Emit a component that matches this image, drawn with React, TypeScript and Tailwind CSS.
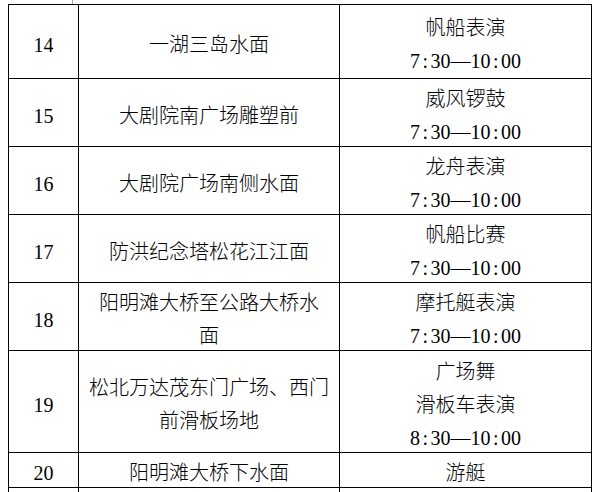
import React from "react";

type Row = { n: string; place: string[]; acts: string[]; h: string };

const rows: Row[] = [
  { n: "14", place: ["一湖三岛水面"], acts: ["帆船表演", "7:30—10:00"], h: "h-[74px]" },
  { n: "15", place: ["大剧院南广场雕塑前"], acts: ["威风锣鼓", "7:30—10:00"], h: "h-[68px]" },
  { n: "16", place: ["大剧院广场南侧水面"], acts: ["龙舟表演", "7:30—10:00"], h: "h-[68px]" },
  { n: "17", place: ["防洪纪念塔松花江江面"], acts: ["帆船比赛", "7:30—10:00"], h: "h-[68px]" },
  { n: "18", place: ["阳明滩大桥至公路大桥水", "面"], acts: ["摩托艇表演", "7:30—10:00"], h: "h-[68px]" },
  { n: "19", place: ["松北万达茂东门广场、西门", "前滑板场地"], acts: ["广场舞", "滑板车表演", "8:30—10:00"], h: "h-[102px]" },
  { n: "20", place: ["阳明滩大桥下水面"], acts: ["游艇"], h: "h-[35px]" },
  { n: "", place: [], acts: [], h: "h-[40px]" },
];

function Line({ text }: { text: string }) {
  if (/^\d/.test(text)) {
    const parts = text.split(":");
    return (
      <div className="whitespace-nowrap">
        {parts.map((p, i) => (
          <React.Fragment key={i}>
            {i > 0 && <span className="mx-[2.5px]">:</span>}
            {p}
          </React.Fragment>
        ))}
      </div>
    );
  }
  return <div className="whitespace-nowrap font-light">{text}</div>;
}

export default function App() {
  const cell =
    "border-r border-b border-black flex flex-col justify-center items-center text-center pt-[7px]";
  return (
    <div className="w-[595px] h-[492px] overflow-hidden bg-white text-black font-[family-name:'Liberation_Serif','Noto_Sans_CJK_SC',serif] text-[20px] leading-[33px]">
      <div className="h-[4px] pl-[72px]">
        <div className="w-px h-full bg-[#a8a8a8]" />
      </div>
      <div className="ml-[8px] w-[584px] grid grid-cols-[70px_261px_252px] border-l border-t border-black">
        {rows.map((r, i) => (
          <React.Fragment key={i}>
            <div className={`${cell} ${r.h}`}>{r.n}</div>
            <div className={`${cell} ${r.h}`}>
              {r.place.map((p, j) => (
                <Line key={j} text={p} />
              ))}
            </div>
            <div className={`${cell} ${r.h}`}>
              {r.acts.map((a, j) => (
                <Line key={j} text={a} />
              ))}
            </div>
          </React.Fragment>
        ))}
      </div>
    </div>
  );
}
